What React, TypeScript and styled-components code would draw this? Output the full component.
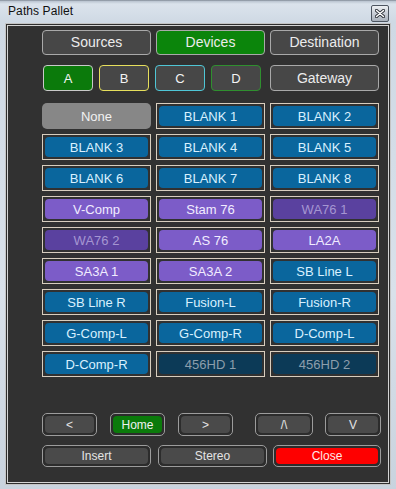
import React from 'react';
import styled, { createGlobalStyle } from 'styled-components';

const GlobalStyle = createGlobalStyle`
  html, body {
    margin: 0;
    padding: 0;
    background: #dfe6ee;
  }
  * {
    box-sizing: border-box;
  }
`;

type Tone = 'none' | 'blue' | 'purple' | 'dimPurple' | 'dimBlue';

const tones: Record<Tone, { bg: string; fg: string }> = {
  none: { bg: '#878787', fg: '#f2f2f2' },
  blue: { bg: '#0a669d', fg: '#d9f1ff' },
  purple: { bg: '#7c5cc8', fg: '#f1ecff' },
  dimPurple: { bg: '#5a419f', fg: '#a596d2' },
  dimBlue: { bg: '#0c3a57', fg: '#8c9eac' },
};

const Window = styled.div`
  width: 396px;
  height: 489px;
  display: flex;
  flex-direction: column;
  padding: 0 5px 4px 5px;
  background: linear-gradient(180deg, #6f7884 0px, #b9c3cf 1px, #dbe3ec 4px, #cfd9e4 22px, #d9e1ea 60%, #c9d3de 100%);
  font-family: 'Liberation Sans', Arial, sans-serif;
`;

const TitleBar = styled.div`
  height: 23px;
  display: flex;
  align-items: center;
  justify-content: space-between;
  padding: 0 2px 1px 3px;
`;

const Title = styled.span`
  font-size: 12px;
  color: #111;
  letter-spacing: 0.1px;
`;

const CloseBox = styled.div`
  width: 18px;
  height: 17px;
  margin-top: 4px;
  border: 1px solid #4d5560;
  border-radius: 2px;
  background: linear-gradient(180deg, #eef1f4 0%, #c9ced6 50%, #aab2bc 100%);
  display: flex;
  align-items: center;
  justify-content: center;
`;

const Panel = styled.div`
  flex: 1;
  border: 1px solid #c4c4c4;
  padding: 1px;
  background: #2e2e2e;
  display: flex;
`;

const PanelInner = styled.div`
  flex: 1;
  border: 1px solid #d4d4d4;
  background: #313131;
  padding: 4px 0 15px 34px;
  display: flex;
  flex-direction: column;
`;

const Row = styled.div<{ $gap: number; $mt?: number }>`
  display: flex;
  gap: ${(p) => p.$gap}px;
  margin-top: ${(p) => p.$mt ?? 0}px;
`;

const TabButton = styled.div<{ $active?: boolean; $h?: number }>`
  width: 109px;
  height: ${(p) => p.$h ?? 25}px;
  border: 1px solid #a9a9a9;
  border-radius: 4px;
  background: ${(p) => (p.$active ? '#0b850b' : '#474747')};
  color: #ececec;
  font-size: 14px;
  display: flex;
  align-items: center;
  justify-content: center;
  padding-bottom: 1px;
`;

const BankGroup = styled.div`
  display: flex;
  gap: 6px;
  margin-left: 1px;
  margin-right: 9px;
`;

const BankButton = styled.div<{ $ring: string; $active?: boolean }>`
  width: 50px;
  height: 26px;
  border: 1px solid ${(p) => p.$ring};
  border-radius: 4px;
  background: ${(p) => (p.$active ? '#0b7a0b' : '#474747')};
  color: #f4f4f4;
  font-size: 13px;
  display: flex;
  align-items: center;
  justify-content: center;
`;

const Grid = styled.div`
  display: grid;
  grid-template-columns: repeat(3, 109px);
  grid-auto-rows: 26px;
  column-gap: 5px;
  row-gap: 5px;
  margin-top: 12px;
`;

const Cell = styled.div<{ $framed: boolean }>`
  border: 1px solid ${(p) => (p.$framed ? '#d8cebf' : 'transparent')};
  padding: ${(p) => (p.$framed ? '2px' : '0')};
  display: flex;
`;

const CellFill = styled.div<{ $tone: Tone; $framed: boolean }>`
  flex: 1;
  margin: ${(p) => (p.$framed ? '0' : '-1px')};
  border-radius: ${(p) => (p.$framed ? 4 : 5)}px;
  background: ${(p) => tones[p.$tone].bg};
  color: ${(p) => tones[p.$tone].fg};
  font-size: 13px;
  display: flex;
  align-items: center;
  justify-content: center;
`;

const Footer = styled.div`
  margin-top: auto;
  display: flex;
  flex-direction: column;
  gap: 9px;
`;

const FrameButton = styled.div<{ $w: number; $h: number; $ml?: number }>`
  width: ${(p) => p.$w}px;
  height: ${(p) => p.$h}px;
  margin-left: ${(p) => p.$ml ?? 0}px;
  border: 1px solid #9c9c9c;
  border-radius: 5px;
  padding: 2px;
  background: #2c2c2c;
  display: flex;
`;

const FrameFill = styled.div<{ $fill: string; $fg: string }>`
  flex: 1;
  border-radius: 4px;
  background: ${(p) => p.$fill};
  color: ${(p) => p.$fg};
  font-size: 12px;
  display: flex;
  align-items: center;
  justify-content: center;
`;

const cells: { label: string; tone: Tone }[] = [
  { label: 'None', tone: 'none' },
  { label: 'BLANK 1', tone: 'blue' },
  { label: 'BLANK 2', tone: 'blue' },
  { label: 'BLANK 3', tone: 'blue' },
  { label: 'BLANK 4', tone: 'blue' },
  { label: 'BLANK 5', tone: 'blue' },
  { label: 'BLANK 6', tone: 'blue' },
  { label: 'BLANK 7', tone: 'blue' },
  { label: 'BLANK 8', tone: 'blue' },
  { label: 'V-Comp', tone: 'purple' },
  { label: 'Stam 76', tone: 'purple' },
  { label: 'WA76 1', tone: 'dimPurple' },
  { label: 'WA76 2', tone: 'dimPurple' },
  { label: 'AS 76', tone: 'purple' },
  { label: 'LA2A', tone: 'purple' },
  { label: 'SA3A 1', tone: 'purple' },
  { label: 'SA3A 2', tone: 'purple' },
  { label: 'SB Line L', tone: 'blue' },
  { label: 'SB Line R', tone: 'blue' },
  { label: 'Fusion-L', tone: 'blue' },
  { label: 'Fusion-R', tone: 'blue' },
  { label: 'G-Comp-L', tone: 'blue' },
  { label: 'G-Comp-R', tone: 'blue' },
  { label: 'D-Comp-L', tone: 'blue' },
  { label: 'D-Comp-R', tone: 'blue' },
  { label: '456HD 1', tone: 'dimBlue' },
  { label: '456HD 2', tone: 'dimBlue' },
];

const banks = [
  { label: 'A', ring: '#c9c9c9', active: true },
  { label: 'B', ring: '#e6df5c' },
  { label: 'C', ring: '#4fc6d6' },
  { label: 'D', ring: '#2f8f2f' },
];

const grey = '#4a4a4a';
const light = '#e4e4e4';

export default function App() {
  return (
    <>
      <GlobalStyle />
      <Window>
        <TitleBar>
          <Title>Paths Pallet</Title>
          <CloseBox>
            <svg width="10" height="9" viewBox="0 0 10 9">
              <path d="M1.5 1.5 L8.5 7.5 M8.5 1.5 L1.5 7.5" stroke="#2b2f36" strokeWidth="3.2" strokeLinecap="round" />
              <path d="M1.5 1.5 L8.5 7.5 M8.5 1.5 L1.5 7.5" stroke="#ffffff" strokeWidth="1.5" strokeLinecap="round" />
            </svg>
          </CloseBox>
        </TitleBar>
        <Panel>
          <PanelInner>
            <Row $gap={5}>
              <TabButton>Sources</TabButton>
              <TabButton $active>Devices</TabButton>
              <TabButton>Destination</TabButton>
            </Row>
            <Row $gap={0} $mt={10}>
              <BankGroup>
                {banks.map((b) => (
                  <BankButton key={b.label} $ring={b.ring} $active={b.active}>
                    {b.label}
                  </BankButton>
                ))}
              </BankGroup>
              <TabButton $h={26}>Gateway</TabButton>
            </Row>
            <Grid>
              {cells.map((c) => (
                <Cell key={c.label} $framed={c.tone !== 'none'}>
                  <CellFill $tone={c.tone} $framed={c.tone !== 'none'}>
                    {c.label}
                  </CellFill>
                </Cell>
              ))}
            </Grid>
            <Footer>
              <Row $gap={0}>
                <FrameButton $w={55} $h={23}>
                  <FrameFill $fill={grey} $fg={light}>&lt;</FrameFill>
                </FrameButton>
                <FrameButton $w={55} $h={23} $ml={13}>
                  <FrameFill $fill="#0b7a0b" $fg="#f0f0f0">Home</FrameFill>
                </FrameButton>
                <FrameButton $w={55} $h={23} $ml={13}>
                  <FrameFill $fill={grey} $fg={light}>&gt;</FrameFill>
                </FrameButton>
                <FrameButton $w={58} $h={23} $ml={22}>
                  <FrameFill $fill={grey} $fg={light}>/\</FrameFill>
                </FrameButton>
                <FrameButton $w={56} $h={23} $ml={12}>
                  <FrameFill $fill={grey} $fg={light}>V</FrameFill>
                </FrameButton>
              </Row>
              <Row $gap={0}>
                <FrameButton $w={109} $h={22}>
                  <FrameFill $fill={grey} $fg={light}>Insert</FrameFill>
                </FrameButton>
                <FrameButton $w={109} $h={22} $ml={7}>
                  <FrameFill $fill={grey} $fg={light}>Stereo</FrameFill>
                </FrameButton>
                <FrameButton $w={108} $h={22} $ml={6}>
                  <FrameFill $fill="#fe0000" $fg="#ffe8e8">Close</FrameFill>
                </FrameButton>
              </Row>
            </Footer>
          </PanelInner>
        </Panel>
      </Window>
    </>
  );
}
